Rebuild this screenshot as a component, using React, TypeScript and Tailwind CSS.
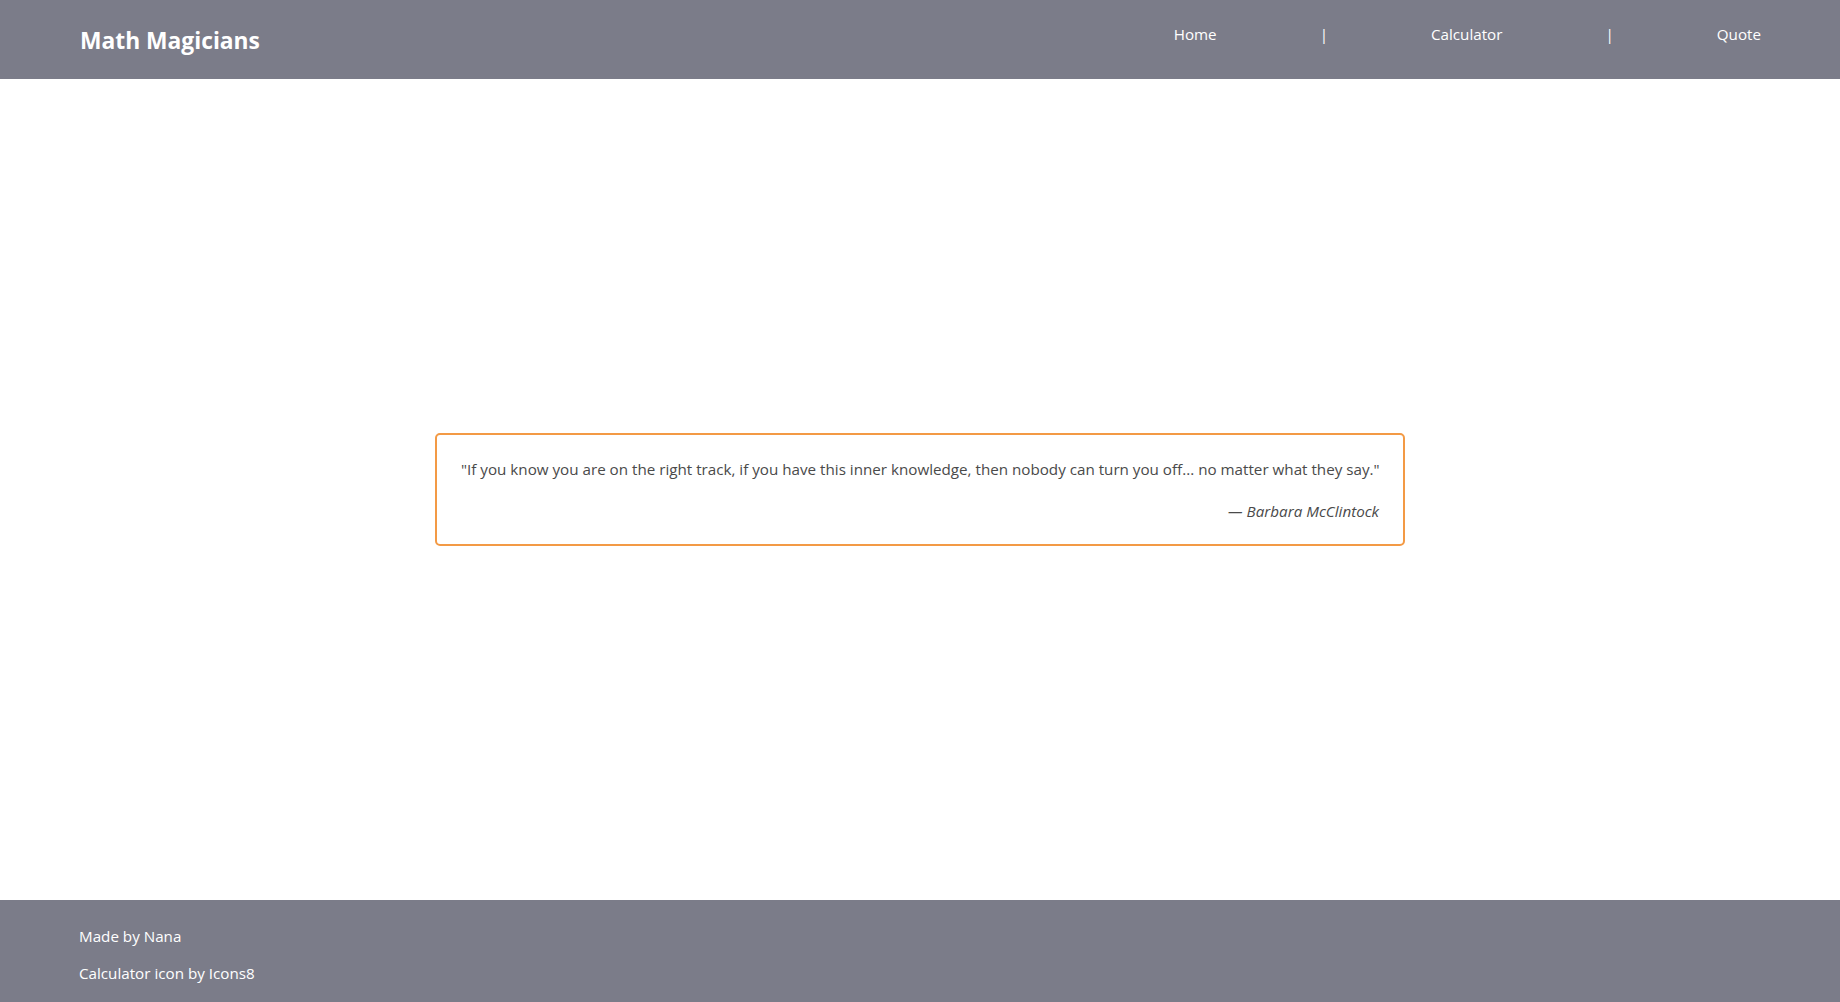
import React from "react";

export default function App() {
  const font = { fontFamily: '"Open Sans", "Noto Sans", sans-serif' };
  return (
    <div className="flex min-h-[1002px] flex-col bg-white" style={font}>
      <header className="flex h-[79px] items-start justify-between bg-[#7b7c89] pl-[80px] pr-[79px] text-white">
        <h1 className="mt-[26px] text-[22.8px] font-bold leading-[30px]">Math Magicians</h1>
        <nav className="mt-[22px] flex items-center gap-[103px] text-[15.2px] leading-[24px]">
          <a>Home</a>
          <span>|</span>
          <a>Calculator</a>
          <span>|</span>
          <a>Quote</a>
        </nav>
      </header>
      <main className="flex flex-1 items-center justify-center">
        <div className="w-[970px] rounded-[5px] border-2 border-[#f39a45] px-[24px] pb-[21px] pt-[22px] text-[#4a4a4a]">
          <p className="whitespace-nowrap text-right text-[15.2px] leading-[24px]">
            "If you know you are on the right track, if you have this inner knowledge, then nobody can turn you off... no matter what they say."
          </p>
          <p className="mt-[18px] text-right text-[15.2px] italic leading-[24px]">— Barbara McClintock</p>
        </div>
      </main>
      <footer className="h-[102px] bg-[#7b7c89] pl-[79px] pt-[24px] text-[15.2px] leading-[24px] text-white">
        <p>Made by Nana</p>
        <p className="mt-[13px]">Calculator icon by Icons8</p>
      </footer>
    </div>
  );
}
